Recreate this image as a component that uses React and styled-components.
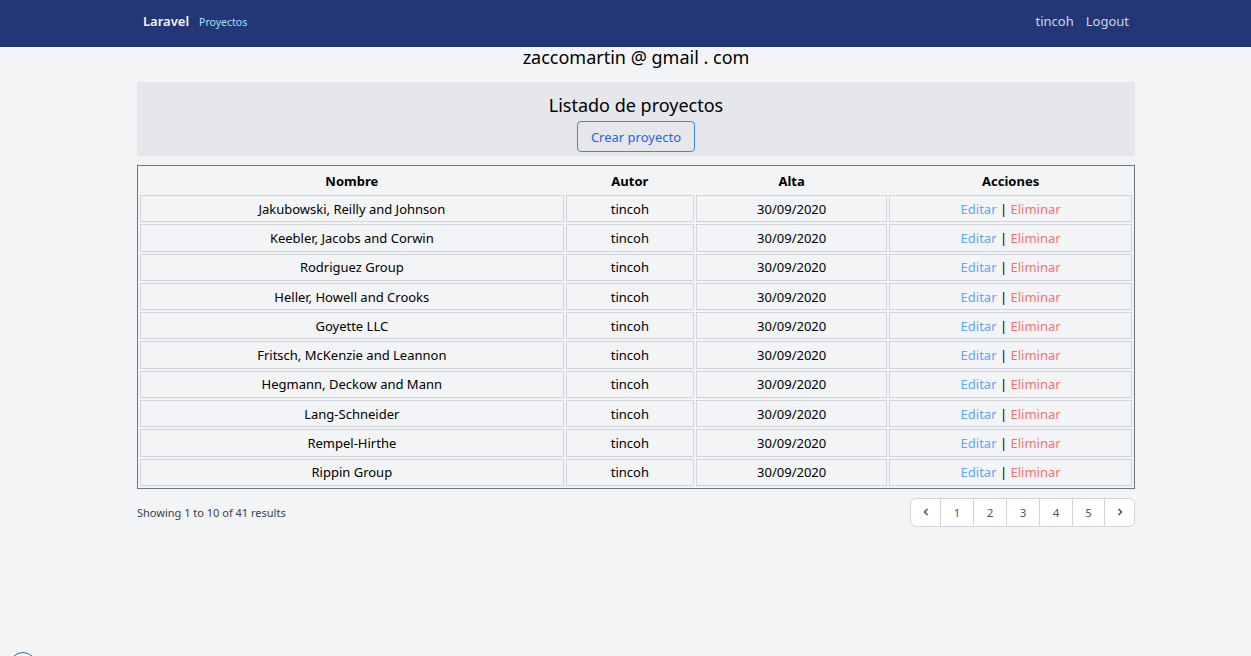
import React from "react";
import styled, { createGlobalStyle } from "styled-components";

const Global = createGlobalStyle`
  html, body { margin: 0; padding: 0; }
  body {
    background: #f3f4f6;
    font-family: "Noto Sans", "Open Sans", sans-serif;
    color: #000;
    min-height: 656px;
  }
`;

const Nav = styled.nav`
  height: 47px;
  background: #233778;
  display: flex;
  align-items: center;
  padding-bottom: 6px;
  box-sizing: border-box;
`;

const NavInner = styled.div`
  width: 986px;
  margin-left: calc(50% - 482.5px);
  display: flex;
  align-items: center;
  justify-content: space-between;
`;

const NavGroup = styled.div`
  display: flex;
  align-items: baseline;
  gap: ${(p) => p.$gap}px;
`;

const Brand = styled.a`
  color: #f3f4f6;
  font-weight: 600;
  font-size: 13px;
  text-decoration: none;
`;

const NavLink = styled.a`
  color: ${(p) => (p.$accent ? "#a3e3f2" : "#d1d5db")};
  font-size: ${(p) => (p.$accent ? 10.5 : 13)}px;
  text-decoration: none;
`;

const Container = styled.main`
  width: 998px;
  margin-left: calc(50% - 488.5px);
  display: flex;
  flex-direction: column;
`;

const Email = styled.div`
  text-align: center;
  font-size: 18px;
  line-height: 20px;
  height: 35px;
`;

const Header = styled.section`
  background: #e5e7eb;
  display: flex;
  flex-direction: column;
  align-items: center;
  padding: 10px 0 4px;
  height: 74px;
  box-sizing: border-box;
`;

const Title = styled.h2`
  margin: 0;
  font-weight: 400;
  font-size: 18px;
  line-height: 26px;
`;

const Button = styled.button`
  margin-top: 3px;
  font-family: inherit;
  background: transparent;
  border: 1px solid #3b82f6;
  border-radius: 4px;
  color: #2563eb;
  font-size: 13px;
  width: 118px;
  height: 31px;
  cursor: pointer;
`;

const Table = styled.table`
  margin-top: 9px;
  width: 998px;
  border: 1px solid #6b7280;
  border-spacing: 2px;
  font-size: 13px;
`;

const Th = styled.th`
  font-weight: 700;
  height: 25px;
  padding: 0;
  width: ${(p) => p.$w}px;
`;

const Td = styled.td`
  border: 1px solid #d1d5db;
  text-align: center;
  height: 25.3px;
  padding: 0;
  line-height: 18px;
`;

const Edit = styled.a`
  color: #60a5fa;
`;
const Del = styled.a`
  color: #f87171;
`;

const Footer = styled.div`
  display: flex;
  justify-content: space-between;
  align-items: center;
  margin-top: 9px;
`;

const Showing = styled.p`
  margin: 0;
  font-size: 11px;
  color: #374151;
`;

const Pager = styled.div`
  display: flex;
  background: #fff;
  border: 1px solid #d1d5db;
  border-radius: 6px;
  height: 29px;
  box-sizing: border-box;
  overflow: hidden;
`;

const PageItem = styled.span`
  box-sizing: border-box;
  width: ${(p) => p.$w}px;
  display: flex;
  align-items: center;
  justify-content: center;
  font-size: 11.5px;
  color: #4b5563;
  border-left: ${(p) => (p.$first ? "none" : "1px solid #d1d5db")};
`;

const DebugIcon = styled.div`
  position: fixed;
  left: 9px;
  top: 652px;
  width: 26px;
  height: 26px;
  border: 1.5px solid #2f6db3;
  border-radius: 50%;
`;

const rows = [
  "Jakubowski, Reilly and Johnson",
  "Keebler, Jacobs and Corwin",
  "Rodriguez Group",
  "Heller, Howell and Crooks",
  "Goyette LLC",
  "Fritsch, McKenzie and Leannon",
  "Hegmann, Deckow and Mann",
  "Lang-Schneider",
  "Rempel-Hirthe",
  "Rippin Group",
];

const Chevron = ({ dir }) => (
  <svg width="10" height="10" viewBox="0 0 10 10">
    <path
      d={dir === "l" ? "M6.5 2 L3.5 5 L6.5 8" : "M3.5 2 L6.5 5 L3.5 8"}
      fill="none"
      stroke="#4b5563"
      strokeWidth="1.5"
    />
  </svg>
);

export default function App() {
  return (
    <>
      <Global />
      <Nav>
        <NavInner>
          <NavGroup $gap={10}>
            <Brand>Laravel</Brand>
            <NavLink $accent>Proyectos</NavLink>
          </NavGroup>
          <NavGroup $gap={12}>
            <NavLink>tincoh</NavLink>
            <NavLink>Logout</NavLink>
          </NavGroup>
        </NavInner>
      </Nav>
      <Container>
        <Email>zaccomartin @ gmail . com</Email>
        <Header>
          <Title>Listado de proyectos</Title>
          <Button>Crear proyecto</Button>
        </Header>
        <Table>
          <thead>
            <tr>
              <Th $w={426}>Nombre</Th>
              <Th $w={129}>Autor</Th>
              <Th $w={192}>Alta</Th>
              <Th $w={244}>Acciones</Th>
            </tr>
          </thead>
          <tbody>
            {rows.map((r) => (
              <tr key={r}>
                <Td>{r}</Td>
                <Td>tincoh</Td>
                <Td>30/09/2020</Td>
                <Td>
                  <Edit>Editar</Edit> | <Del>Eliminar</Del>
                </Td>
              </tr>
            ))}
          </tbody>
        </Table>
        <Footer>
          <Showing>Showing 1 to 10 of 41 results</Showing>
          <Pager>
            <PageItem $w={29} $first>
              <Chevron dir="l" />
            </PageItem>
            {[1, 2, 3, 4, 5].map((n) => (
              <PageItem key={n} $w={n === 5 ? 32 : 33}>
                {n}
              </PageItem>
            ))}
            <PageItem $w={30}>
              <Chevron dir="r" />
            </PageItem>
          </Pager>
        </Footer>
      </Container>
      <DebugIcon />
    </>
  );
}
